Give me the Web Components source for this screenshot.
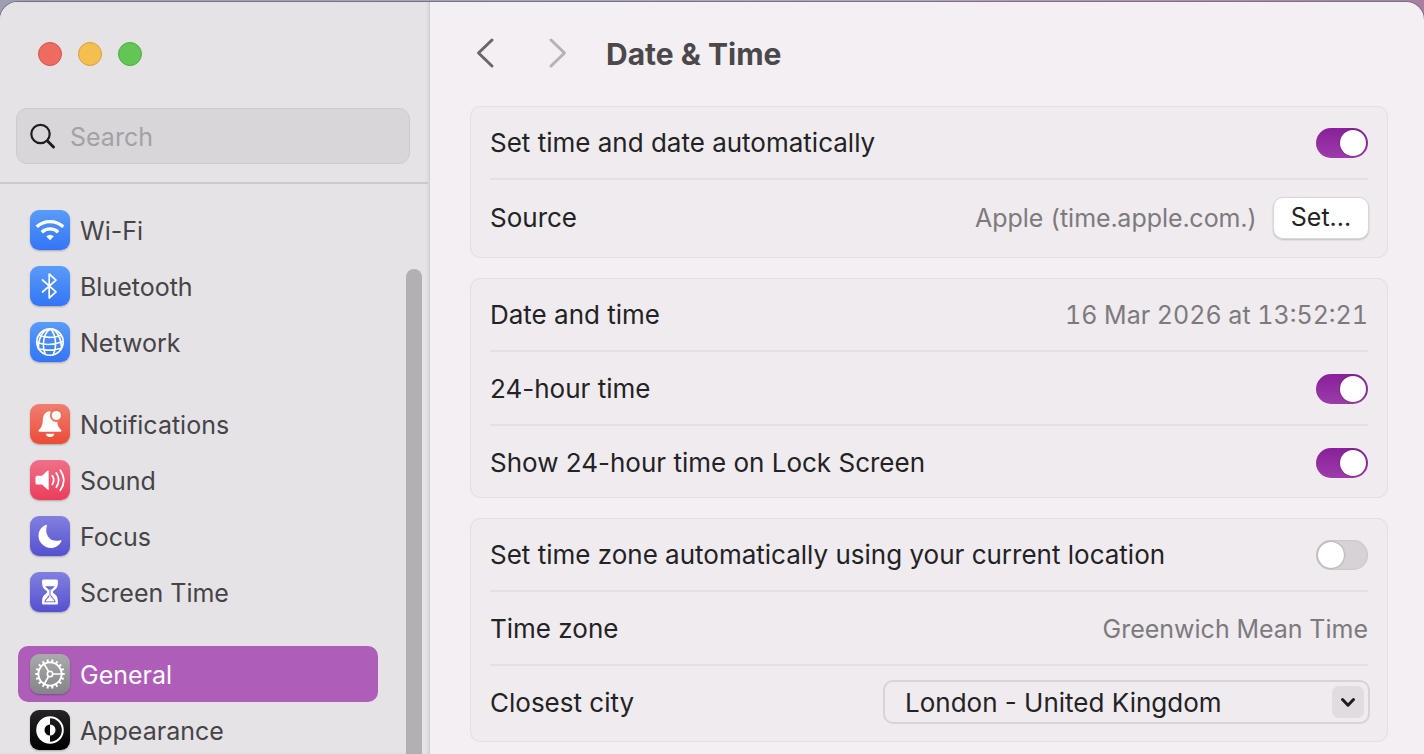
<!DOCTYPE html>
<html lang="en-GB">
<head>
<meta charset="utf-8">
<title>Date &amp; Time</title>
<style>
html, body { margin: 0; height: 100%; }
body {
  font: 25px/32px Inter, "Liberation Sans", sans-serif;
  color: #232225;
  background: linear-gradient(90deg, #9f9db2, #a9a8b4 42%, #b7a3b2 65%, #a97f9f);
  overflow: hidden;
}
</style>
</head>
<body>
<settings-window>
  <settings-sidebar slot="sidebar">
    <side-group>
      <side-item icon="wifi">Wi-Fi</side-item>
      <side-item icon="bluetooth">Bluetooth</side-item>
      <side-item icon="network">Network</side-item>
    </side-group>
    <side-group>
      <side-item icon="bell">Notifications</side-item>
      <side-item icon="sound">Sound</side-item>
      <side-item icon="focus">Focus</side-item>
      <side-item icon="hourglass">Screen Time</side-item>
    </side-group>
    <side-group>
      <side-item icon="general" selected>General</side-item>
      <side-item icon="appearance">Appearance</side-item>
    </side-group>
  </settings-sidebar>
  <pane-header>Date &amp; Time</pane-header>
  <settings-card>
    <toggle-row label="Set time and date automatically" on></toggle-row>
    <button-row label="Source" value="Apple (time.apple.com.)" action="Set..."></button-row>
  </settings-card>
  <settings-card>
    <value-row label="Date and time" value="16 Mar 2026 at 13:52:21"></value-row>
    <toggle-row label="24-hour time" on></toggle-row>
    <toggle-row label="Show 24-hour time on Lock Screen" on></toggle-row>
  </settings-card>
  <settings-card>
    <toggle-row label="Set time zone automatically using your current location"></toggle-row>
    <value-row label="Time zone" value="Greenwich Mean Time"></value-row>
    <select-row label="Closest city" value="London - United Kingdom"></select-row>
  </settings-card>
</settings-window>

<script>
const define = (name, render) => customElements.define(name, class extends HTMLElement {
  constructor() {
    super();
    this.attachShadow({ mode: 'open' });
  }
  connectedCallback() {
    this.shadowRoot.innerHTML = '<style>*{box-sizing:border-box}</style>' + render(this);
  }
});

define('settings-window', () => `
<style>
:host { display: block; height: 100vh; padding-top: 2px; box-sizing: border-box; }
.window {
  display: grid; grid-template-columns: 430px minmax(0, 1fr); height: 100%;
  background: #f4eff3; border-radius: 18px 18px 0 0; overflow: hidden;
  box-shadow: 0 0 0 1px #77718a;
}
main { padding: 0 36px 12px 40px; display: flex; flex-direction: column; gap: 20px; min-width: 0; }
</style>
<div class="window"><slot name="sidebar"></slot><main><slot></slot></main></div>`);

define('settings-sidebar', () => `
<style>
:host {
  display: flex; flex-direction: column; min-height: 0; background: #e5e3e6;
  border-right: 1px solid #cfccd0; box-shadow: inset -2px 0 2px #dbd9dc; color: #454447;
}
.lights { display: flex; gap: 16px; padding: 40px 38px 42px; }
button { width: 24px; height: 24px; padding: 0; border: 1px solid; border-radius: 50%; }
.close { background: #ee6b60; border-color: #dc5047; }
.min { background: #f5bf4f; border-color: #dba039; }
.max { background: #62c655; border-color: #4fac42; }
.search {
  display: flex; align-items: center; margin: 0 19px 18px 16px; height: 56px; padding: 0 12px;
  gap: 13px; background: #d8d6d9; border: 1px solid #cccacd; border-radius: 11px;
}
.search svg { flex: none; width: 28px; height: 28px; }
input { flex: 1; min-width: 0; border: 0; background: none; padding: 2px 0 0; font: inherit; outline: 0; color: inherit; }
input::placeholder { color: #a3a1a5; opacity: 1; }
.list { display: flex; flex: 1; min-height: 0; border-top: 2px solid #cbc9cc; margin-right: 1px; }
nav { flex: 1; padding: 18px 28px 0 18px; display: flex; flex-direction: column; gap: 26px; overflow: hidden; }
.thumb { width: 16px; margin: 85px 6px 0 0; background: #b2b0b3; border-radius: 8px 8px 0 0; }
</style>
<div class="lights"><button class="close" aria-label="Close"></button><button class="min" aria-label="Minimise"></button><button class="max" aria-label="Zoom"></button></div>
<label class="search"><svg viewBox="0 0 28 28" fill="none" stroke="#1d1c20" stroke-linecap="round"><circle cx="11.500" cy="12" r="9.200" stroke-width="2.200"/><path d="M18.500 19l6 6" stroke-width="3"/></svg><input type="search" placeholder="Search" aria-label="Search"></label>
<div class="list"><nav><slot></slot></nav><div class="thumb"></div></div>`);

define('side-group', () => `<style>:host{display:flex;flex-direction:column;flex:none}</style><slot></slot>`);

const gearTeeth = Array.from({ length: 18 }, (_, i) => `<path d="M20 8.500V5.300" transform="rotate(${i * 20 + 10} 20 20)" stroke-width="2" stroke-linecap="butt"/>`).join('');
const icons = {
  wifi: ['#5a9cf8', '#3375f6', `<path d="M6.700 16.800a19.500 19.500 0 0 1 26.600 0M11.800 22.200a12 12 0 0 1 16.400 0" stroke-width="3.300" stroke-linecap="butt"/><path d="M16.200 26.300a5.800 5.800 0 0 1 7.600 0L20 30.300z" fill="#fff" stroke="none"/>`],
  bluetooth: ['#5a9cf8', '#3375f6', `<path d="M12.500 14L26 25.800 19.200 32V8L26 14.200 12.500 26" stroke-width="1.700"/>`],
  network: ['#5a9cf8', '#3375f6', `<g stroke-width="1.600"><circle cx="20" cy="20" r="13.200"/><path d="M20.500 7c-7 3-9 17-5 25.500M20.500 7c5 5 7 17 2.500 26M19 7c-6 1-11 9-10.500 20M22 7c5 2 9.500 9 9.500 19M9 13q8.500 4.500 22 .500M7 20.500q12 4.500 26-1M9.500 27q10 2.500 21-.500"/></g>`],
  bell: ['#f07f70', '#ec4b37', `<path d="M20 7.200c-5 .300-7 4-7.200 9-.200 5-1.200 6.800-3.800 9.500-1 1-.800 2 .700 2h20.600c1.500 0 1.700-1 .700-2-2.600-2.700-3.600-4.500-3.800-9.500z" fill="#fff" stroke="none"/><path d="M16 29.800h8a4 3.300 0 0 1-8 0z" fill="#fff" stroke="none"/><circle cx="26.300" cy="11.500" r="6.400" fill="#ee6e5d" stroke="none"/><circle cx="26.300" cy="11.500" r="4.600" fill="#fff" stroke="none"/>`],
  sound: ['#f0708a', '#eb3d59', `<path d="M7 15.800h5l5.500-5c.700-.600 1.200-.500 1.200.400v18c0 .900-.500 1-1.200.400l-5.500-5H7q-1.500 0-1.500-1.500v-5.800q0-1.500 1.500-1.500z" fill="#fff" stroke="none"/><path d="M22.300 15.800q2.800 4.300 0 8.600M26.300 13q4.800 7.200 0 14.300M30.300 10.200q7 10 0 20" stroke-width="1.800"/>`],
  focus: ['#8280e0', '#5551cf', `<path d="M16.200 8.800c.700-.300 1 .100.700.900C14 19 20.500 27 30.300 24.300c1-.300 1.500.100 1.100.900C29.300 29.500 25.300 32 21 32 14 32 8.500 26.500 8.500 19.800c0-5 3-9.300 7.700-11z" fill="#fff" stroke="none"/>`],
  hourglass: ['#8280e0', '#5551cf', `<path d="M13.500 7.500h13q1.500 0 1.500 1.500c0 6-1.500 7.800-4.500 9.700q-1.500 1.300 0 2.600c3 1.900 4.500 3.700 4.500 9.700q0 1.500-1.500 1.500h-13q-1.500 0-1.500-1.500c0-6 1.500-7.800 4.500-9.700q1.500-1.300 0-2.600c-3-1.900-4.500-3.700-4.500-9.700q0-1.500 1.500-1.500z" fill="#fff" stroke="none"/><path d="M15.300 14.200h9.400c-.700 1.700-3.900 3-3.900 4.800v3.300c0 2 4 4 4.900 7.900H14.300c.900-3.900 4.900-5.900 4.900-7.900V19c0-1.800-3.200-3.100-3.900-4.800z" fill="#6a67d7" stroke="none"/><path d="M20 17.500v6.500c0 1.500-3 2.500-4 5h8c-1-2.500-4-3.500-4-5" fill="#fff" stroke-width=".8"/>`],
  general: ['#aaa9ae', '#858489', `<circle cx="20" cy="20" r="11.600" stroke-width="1.900"/>${gearTeeth}<circle cx="20" cy="20" r="2.700" stroke-width="1.600"/><path d="M22.800 20H31.500M18.600 17.600L14.200 10M18.600 22.400L14.200 30" stroke-width="1.700"/>`],
  appearance: ['#252525', '#000', `<circle cx="20" cy="20" r="12.800" stroke-width="2"/><path d="M20 7.200a12.800 12.800 0 0 0 0 25.600zM20 14.500a5.500 5.500 0 0 1 0 11z" fill="#fff" stroke="none"/><path d="M20 14.500a5.500 5.500 0 0 0 0 11z" fill="#050505" stroke="none"/>`],
};

define('side-item', el => {
  const [top, bottom, art] = icons[el.getAttribute('icon')];
  return `
<style>
:host { display: block; }
a { display: flex; align-items: center; gap: 10px; height: 56px; padding: 0 12px; border-radius: 10px; color: inherit; text-decoration: none; }
:host([selected]) a { background: #ae5eb8; color: #fff; }
svg { flex: none; width: 40px; height: 40px; border-radius: 9px; background: linear-gradient(${top}, ${bottom}); box-shadow: 0 1px 2px #0004; }
span { padding-top: 2px; }
</style>
<a href="#"${el.hasAttribute('selected') ? ' aria-current="page"' : ''}><svg viewBox="0 0 40 40" fill="none" stroke="#fff" stroke-linecap="round" stroke-linejoin="round" aria-hidden="true">${art}</svg><span><slot></slot></span></a>`;
});

define('pane-header', () => `
<style>
:host { display: flex; align-items: center; height: 84px; padding: 18px 0 0; box-sizing: border-box; flex: none; }
button { width: 72px; height: 40px; padding: 0; border: 0; background: none; text-align: left; }
svg { display: block; width: 32px; height: 40px; fill: none; stroke-width: 3; stroke-linecap: round; stroke-linejoin: round; }
h1 { margin: 0 0 0 -8px; padding-top: 2px; font-size: 30px; line-height: 36px; font-weight: 700; color: #4a484b; }
</style>
<button aria-label="Back"><svg viewBox="0 0 32 40" stroke="#69666a"><path d="M22 7L8.500 20 22 33"/></svg></button><button aria-label="Forward"><svg viewBox="0 0 32 40" stroke="#b5b1b5"><path d="M9 7l13.500 13L9 33"/></svg></button><h1><slot></slot></h1>`);

define('settings-card', () => `
<style>
:host { display: flex; flex-direction: column; flex: none; padding: 0 19px; background: #efebef; border: solid #e4dfe4; border-width: 0 1px; border-radius: 10px; box-shadow: inset 0 1px #e4dfe4, inset 0 -1px #e4dfe4; }
::slotted(:not(:first-child)) { border-top: 2px solid #e3dfe3; }
</style><slot></slot>`);

const rowStyle = `
:host { display: block; }
.row { display: flex; align-items: center; justify-content: space-between; min-height: 72px; padding-top: 2px; gap: 16px; }
label, .label, .value { white-space: nowrap; }
label, .label, select { font-size: 26px; }
.value { color: #7d7a7e; font-variant-numeric: tabular-nums; }
`;

define('toggle-row', el => `
<style>${rowStyle}
input {
  appearance: none; flex: none; display: flex; width: 52px; height: 30px; margin: 0; padding: 2px; border-radius: 15px;
  background: #d6d2d6; box-shadow: inset 0 0 1px 1px #cbc7cb;
}
input::before { content: ""; width: 26px; height: 26px; border-radius: 50%; background: #fff; box-shadow: 0 0 2px #0006; }
input:checked { justify-content: flex-end; background: linear-gradient(#89209a, #9c3ca9); box-shadow: none; }
</style>
<div class="row"><label for="t">${el.getAttribute('label')}</label><input id="t" type="checkbox" role="switch"${el.hasAttribute('on') ? ' checked' : ''}></div>`);

define('value-row', el => `
<style>${rowStyle}</style>
<div class="row"><span class="label">${el.getAttribute('label')}</span><span class="value">${el.getAttribute('value')}</span></div>`);

define('button-row', el => `
<style>${rowStyle}
.row { min-height: 78px; padding: 0 0 2px; }
.label { flex: 1; }
button { height: 42px; width: 96px; margin-right: -1px; padding: 0 0 2px; font: inherit; color: inherit; background: #fff; border: 1px solid #dad6da; border-radius: 10px; box-shadow: 0 1px 2px #0003; }
</style>
<div class="row"><span class="label">${el.getAttribute('label')}</span><span class="value">${el.getAttribute('value')}</span><button>${el.getAttribute('action')}</button></div>`);

define('select-row', el => `
<style>
select { font: inherit; }
${rowStyle}
.row { padding: 14px 0 18px; }
label { padding-top: 2px; }
.box { display: grid; grid-template-columns: 1fr 38px; align-items: center; width: 487px; margin-right: -2px; }
select { grid-area: 1 / 1 / 2 / 3; appearance: none; height: 44px; width: 100%; margin: 0; padding: 2px 44px 0 20px; color: inherit; background: none; border: 2px solid #d8d3d8; border-radius: 10px; }
svg { grid-area: 1 / 2; width: 32px; height: 32px; border-radius: 7px; background: #e0dce0; pointer-events: none; }
</style>
<div class="row"><label for="s">${el.getAttribute('label')}</label><div class="box"><select id="s"><option>${el.getAttribute('value')}</option></select><svg viewBox="0 0 32 32" fill="none" stroke="#1d1c20" stroke-width="3" stroke-linecap="round" stroke-linejoin="round"><path d="M10.500 13.500l5.500 5.700 5.500-5.700"/></svg></div></div>`);
</script>
</body>
</html>
